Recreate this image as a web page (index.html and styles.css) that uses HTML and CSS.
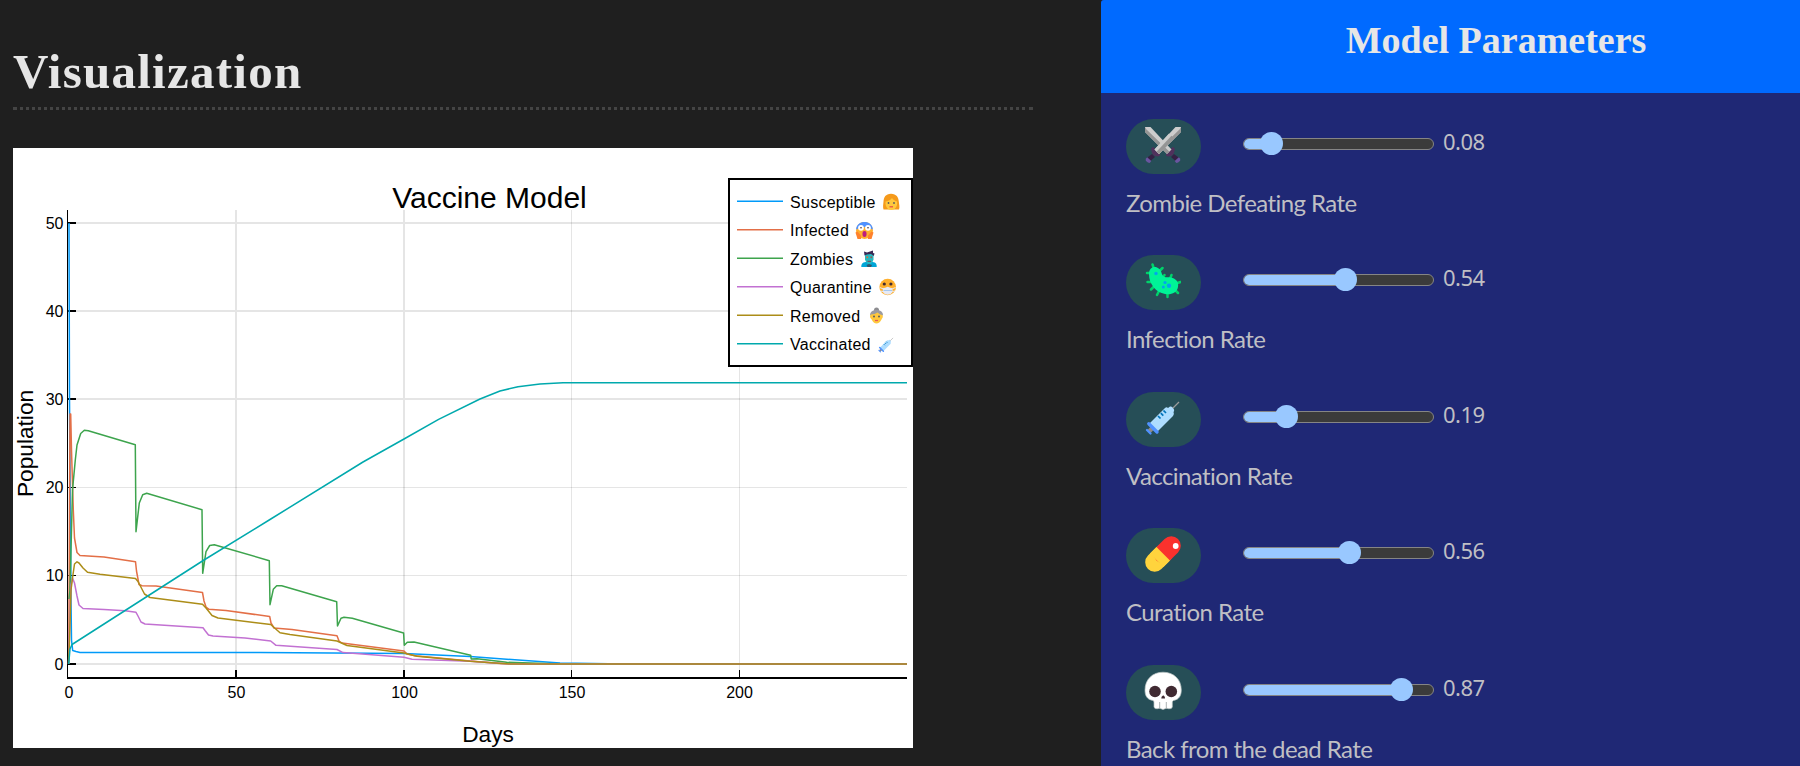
FILE: index.html
```
<!DOCTYPE html>
<html lang="en">
<head>
<meta charset="utf-8">
<title>Vaccine Model</title>
<link rel="stylesheet" href="styles.css">
</head>
<body>
<main class="notebook">
  <h1 class="section-title">Visualization</h1>
  <svg class="plot" viewBox="13 148 900 600" width="900" height="600">
    <rect x="13" y="148" width="900" height="600" fill="#fff"/>
    <g class="grid">
      <path class="thick" d="M236 210V678M404 210V678M68 223H907M68 311H907M68 399H907M68 664H907"/>
      <path d="M571.5 210V678M739.5 210V678M68 487.5H907M68 575.5H907"/>
    </g>
    <g class="axes">
      <path class="thin" d="M67.5 210V679"/>
      <path d="M67 678H907M67 223H76M67 311H76M67 399H76M67 664H76M236 670V678M404 670V678"/>
      <path class="thin" d="M67 487.5H76M67 575.5H76M571.5 670V678M739.5 670V678"/>
    </g>
    <g class="tick y">
      <text x="63.500" y="229">50</text><text x="63.500" y="317">40</text><text x="63.500" y="405">30</text>
      <text x="63.500" y="493">20</text><text x="63.500" y="581">10</text><text x="63.500" y="670">0</text>
    </g>
    <g class="tick x">
      <text x="69" y="698">0</text><text x="236.500" y="698">50</text><text x="404.500" y="698">100</text>
      <text x="572" y="698">150</text><text x="739.500" y="698">200</text>
    </g>
    <text class="plot-title" x="489.500" y="208">Vaccine Model</text>
    <text class="axis-name" x="488" y="742">Days</text>
    <text class="axis-name" transform="translate(32.500 443.500) rotate(-90)">Population</text>
    <g class="series">
      <path stroke="#009af9" d="M69 223L69.500 400L71 600L71.500 640L72.700 650.500L76 651.500L80 652.400L260 652.400L404 653.500L470 656.500L560 663L625 664H907"/>
      <path stroke="#e36f47" d="M68.800 664L69.300 560L70 414L70.700 414L71.500 450L73.300 510L74.500 538L77 552.500L80 555.500L104 557L135.500 561.700L136.500 571L139 584.500L142 585.700L156 586L202.500 592.500L204 601L206 607L209 609.300L226 610.500L269.700 616.500L271 623L274 628L292 629.500L337 635.700L339 641L342 643L404 651L407 654L415 655.800L470 661L500 663.500L540 664H907"/>
      <path stroke="#3da44d" d="M69 599L70 590L71 550L72.500 490L75.300 460L77 445L80.700 433.500L84.300 430.300L88.300 430.700L135.300 444.800L136 531.700L139.300 503L142.700 494.700L146.700 493.300L202 509.700L202.700 573.300L206 551.700L209.700 545.500L214.300 544.700L269.300 560.700L270 604.700L273.300 589.300L276.700 585.700L281.700 585.700L336.700 601.700L337.500 626L341 618.300L344 617.300L352.300 618.300L403.600 633L404.300 645.300L407.300 642.300L414 642L470.700 655.300L471.200 659L477 658.700L506.700 662.300L560 664H907"/>
      <path stroke="#c271d2" d="M68.500 664L69.500 630L71 585L72.500 578L74.500 583L77 596L79 605L83 608.500L104 609.500L125 610.800L136 612.300L138 616L141 622L145 624L203 627.700L205 630.500L208.500 635L213 636L245 638L270.700 641L276 645.300L337 649.500L343 652.600L404 657.200L412 659.300L470 661.300L510 664H907"/>
      <path stroke="#ac8d18" d="M68.500 664L69.500 640L71 590L72.500 578L74.500 564L77 561.800L79 563L83 568L87.500 572.300L100 574.300L135.500 578.500L138 581.500L144.500 594L150 597.500L202.500 604.300L206 608L212 615.500L218 618L270.700 624.500L280 632.700L290 634.500L337 641L347 645.500L404 653L417 656.300L470 661.300L510 664H907"/>
      <path stroke="#00a9ad" d="M68.700 664L70 649L72 644.500L204 560L270 519.500L363 462L404 439L438.600 419.300L480 399L500 391L518 386.700L540 384L563 382.700H907"/>
    </g>
    <g class="legend">
      <rect x="729" y="179" width="183" height="187"/>
      <g class="keys">
        <path stroke="#009af9" d="M737 201.300H783"/><path stroke="#e36f47" d="M737 229.700H783"/>
        <path stroke="#3da44d" d="M737 258.300H783"/><path stroke="#c271d2" d="M737 286.700H783"/>
        <path stroke="#ac8d18" d="M737 315.300H783"/><path stroke="#00a9ad" d="M737 343.700H783"/>
      </g>
      <text x="790" y="208">Susceptible</text><text x="790" y="236">Infected</text><text x="790" y="265">Zombies</text>
      <text x="790" y="293">Quarantine</text><text x="790" y="322">Removed</text><text x="790" y="350">Vaccinated</text>
    </g>
    <!-- woman -->
    <g transform="translate(882.500 193.500)">
      <path fill="#f59a1b" d="M8.500 .3C3 .3 1.300 4 1 8C.8 11 .2 13 1 16H16.500C17.500 13 16.500 11 16.300 8C16 4 14 .3 8.500 .3Z"/>
      <path fill="#ffc83d" d="M3 8C5 8 8 6.500 9.500 4.500C10.500 6.500 13 7.500 14.500 8C15.500 13 12 16.500 8.700 16.500C5.500 16.500 2.500 13.500 3 8Z"/>
      <circle cx="6" cy="9.500" r=".9" fill="#565a60"/><circle cx="11.500" cy="9.500" r=".9" fill="#565a60"/>
      <path d="M7 13.300H10.500" stroke="#e5454d" stroke-width="1.200"/>
    </g>
    <!-- screaming face -->
    <g transform="translate(855.500 221.500)">
      <circle cx="9" cy="9" r="8.500" fill="#ffb02e"/><path fill="#5092ff" d="M.6 8C1 3 4.500 .4 9 .4S17 3 17.400 8Q9 3 .6 8Z"/>
      <circle cx="5.500" cy="6.300" r="2.900" fill="#fff"/><circle cx="12.500" cy="6.300" r="2.900" fill="#fff"/>
      <circle cx="5.500" cy="6.300" r=".8" fill="#402a32"/><circle cx="12.500" cy="6.300" r=".8" fill="#402a32"/>
      <rect x="7" y="9.500" width="4" height="6" rx="2" fill="#bb1d80"/>
      <path fill="#ff822d" d="M0 11L2 10L5.500 14V17.500H2ZM18 11L16 10L12.500 14V17.500H16Z"/>
    </g>
    <!-- zombie -->
    <g transform="translate(861 250)">
      <path fill="#00a6d8" d="M.3 17C0 13.500 2.500 12 6 11.800H10.500C14 12 16 13.500 15.700 17Z"/>
      <path fill="#26b9c0" d="M4 3.500H12.500V9.500Q11 14 8.300 14T4 9.500Z"/>
      <path fill="#3b2a55" d="M3.500 5.500L3 1.500L6 2.500L12 .5V3L13.500 3.500L12.800 6L10 4L6 4.500Z"/>
      <circle cx="6.300" cy="7.300" r="1" fill="#d9713f"/><circle cx="10.300" cy="7.300" r="1" fill="#9b5f55"/>
      <path d="M6.500 11.300H10" stroke="#7b3a58"/><path fill="#33566c" d="M5.500 15L8 14L11 15L10 17H6.500Z"/>
    </g>
    <!-- face with medical mask -->
    <g transform="translate(879 278)">
      <circle cx="8.700" cy="9" r="8.300" fill="#ffb02e"/>
      <circle cx="5.300" cy="6" r="1.600" fill="#402a32"/><circle cx="11.900" cy="6" r="1.600" fill="#402a32"/>
      <path d="M.8 9.500L4 10.800M16.600 9.500L13.300 10.800M1.500 13L4 13.500M16 13L13.300 13.500" stroke="#e7eaf5"/>
      <path fill="#e7eaf5" d="M3.800 10.300Q6 10 8.700 8.700Q11.400 10 13.600 10.300V14Q12 16.800 8.700 16.800T3.800 14Z"/>
      <path d="M4.500 12.500H13" stroke="#a4c7ef"/>
    </g>
    <!-- older person -->
    <g transform="translate(869 307.500)">
      <circle cx="7.500" cy="2.500" r="2.500" fill="#8d8d91"/><path fill="#9b9ba1" d="M1 8C1 4 4 2.500 7.500 2.500S14 4 14 8Z"/>
      <path fill="#ffc83d" d="M2 7Q6 7 8.500 5Q11 7 13 7.500C15 9 13 11 12.500 12Q10.500 16 7.500 16T2.700 12C.5 10 .5 8 2 7Z"/>
      <circle cx="5" cy="9" r="1" fill="#555c65"/><circle cx="10" cy="9" r="1" fill="#555c65"/>
      <path d="M6 13H9" stroke="#e55858" stroke-width="1.200"/>
    </g>
    <svg x="878" y="337" width="16" height="16" viewBox="0 0 36 36"><use href="#syringe"/></svg>
  </svg>
</main>

<aside class="panel">
  <header class="panel-head"><h2>Model Parameters</h2></header>
  <div class="params">
    <section class="param">
      <div class="control">
        <span class="badge"><svg viewBox="0 0 36 36" width="36" height="36">
          <g id="blade">
            <path fill="#50315c" d="M8.500 20Q5.800 20.500 6.300 23Q7 29 12.500 29.500Q15.500 29.300 15 27Z"/>
            <path fill="#352044" d="M7 27L10 30L5 34.500L1.700 31Z"/>
            <path fill="#6a55a0" d="M2.200 30.300L6.300 34L4.700 36Q3 36 .8 33.700Q0 31.500 2.200 30.300Z"/>
            <path fill="#cdcdcd" d="M30.500 0H36V5L14 27L9.500 22.500Z"/>
            <path fill="#959595" d="M36 5L14 27L11.500 24.700L34.500 2.500L36 0Z"/>
          </g>
          <use href="#blade" transform="matrix(-1 0 0 1 36 0)"/>
          <path fill="#cdcdcd" d="M24 6.500L28.500 11L14 27L9.500 22.500Z"/><path fill="#959595" d="M26.500 8.800L29.500 11.500L14 27L11.500 24.700Z"/>
        </svg></span>
        <div class="slider"><span class="fill" style="width:27.5px"></span></div>
        <output>0.08</output>
      </div>
      <p>Zombie Defeating Rate</p>
    </section>
    <section class="param">
      <div class="control">
        <span class="badge"><svg viewBox="0 0 36 36" width="36" height="36">
          <path d="M7.500 1.500L9 6M17.500 5L14.500 8M2 10H6M2.500 19H7M19.500 12L17.500 15M26.500 12L25 16M35.500 19L31 20.500M6 26.500L9 23.500M12 32L14 28M22.500 34V29M33 30L30 27" stroke="#00d26a" stroke-width="2.500" stroke-linecap="round" fill="none"/>
          <path fill="#00f397" d="M4 11C4 5.500 8 3 12 4.500C16 6 16 9 17.500 12C19 15 22 14 26 14.500C31 15.500 34 19 33 24C32 30 26 32 20 31C11 29.500 4 21 4 11Z"/>
          <g fill="#00a6ed"><circle cx="11" cy="10.500" r="1.700"/><circle cx="20" cy="19.500" r="1.600"/><circle cx="24" cy="22.700" r="2.200"/><circle cx="18.300" cy="24" r="1.500"/></g>
        </svg></span>
        <div class="slider"><span class="fill" style="width:101.5px"></span></div>
        <output>0.54</output>
      </div>
      <p>Infection Rate</p>
    </section>
    <section class="param">
      <div class="control">
        <span class="badge"><svg viewBox="0 0 36 36" width="36" height="36">
          <g id="syringe">
            <path d="M27 9L34 2" stroke="#9b9b9b" stroke-width="1.200"/>
            <path d="M4 31.500L8 27.500" stroke="#8c8c8c" stroke-width="4.500"/>
            <path d="M2 30L5.500 33.500" stroke="#5092ff" stroke-width="2.300" stroke-linecap="round"/>
            <path fill="#aeddff" d="M3.500 24.500L20 8Q21.500 6.500 23 8L25 6.500Q26.500 6 27.500 7.500L29 9.500Q29.500 11 28.500 12Q29.500 14 28 16L12 32Z"/>
            <path d="M13 16L15.500 18.500M15.800 13.200L18.300 15.700M18.500 10.500L21 13" stroke="#0074ba" stroke-width="1.700"/>
            <path d="M3.800 23.800L12 32" stroke="#5092ff" stroke-width="3.400" stroke-linecap="round"/>
          </g>
        </svg></span>
        <div class="slider"><span class="fill" style="width:42.5px"></span></div>
        <output>0.19</output>
      </div>
      <p>Vaccination Rate</p>
    </section>
    <section class="param">
      <div class="control">
        <span class="badge"><svg viewBox="0 0 36 36" width="36" height="36">
          <path d="M9.700 26.300L18 18" stroke="#ffd43d" stroke-width="19" stroke-linecap="round"/>
          <path d="M18.200 17.800L26.300 9.700" stroke="#fa312d" stroke-width="19" stroke-linecap="round"/>
          <path d="M11.700 24.300L18.200 17.800" stroke="#ffd43d" stroke-width="19"/>
          <circle cx="30.700" cy="10" r="2.900" fill="#fff"/>
        </svg></span>
        <div class="slider"><span class="fill" style="width:105.5px"></span></div>
        <output>0.56</output>
      </div>
      <p>Curation Rate</p>
    </section>
    <section class="param">
      <div class="control">
        <span class="badge"><svg viewBox="0 0 36 36" width="36" height="36" overflow="visible">
          <path fill="#fff" stroke="#b8c1c1" stroke-width=".7" d="M18-.8C7.500-.8 0 6.500 0 17C0 22 1.500 26.500 8 27.500C9 28 9 29 9 31V34Q9.500 36.300 12.500 35.700L14.500 35.200L18 36.500L21.500 35.200L23.500 35.700Q27 36.300 27.300 34V31C27.300 29 27.300 28 28.500 27.500C34.500 26.500 36.300 22 36.300 17C36.300 6.500 29-.8 18-.8Z"/>
          <path d="M14.700 29V36M21.300 29V36" stroke="#a3a9aa" stroke-width=".9"/>
          <circle cx="10" cy="18.500" r="5.800" fill="#402a32"/><circle cx="26.300" cy="18.500" r="5.800" fill="#402a32"/>
          <path fill="#402a32" d="M18.200 22.300Q20.400 23.500 20 25.600H16.300Q16 23.500 18.200 22.300Z"/>
        </svg></span>
        <div class="slider"><span class="fill" style="width:157.5px"></span></div>
        <output>0.87</output>
      </div>
      <p>Back from the dead Rate</p>
    </section>
  </div>
</aside>
</body>
</html>
```
FILE: styles.css
```
* { box-sizing: border-box; }
body {
  margin: 0;
  height: 766px;
  overflow: hidden;
  display: flex;
  background: #1f1f1f;
  font-family: Lato, sans-serif;
}
.notebook { width: 1101px; padding: 44px 68px 0 13px; }
.section-title {
  margin: 0 0 38px;
  height: 66px;
  border-bottom: 3px dotted #444;
  font: bold 49px/56px "Liberation Serif", serif;
  letter-spacing: 1.25px;
  color: #e6e6e6;
}
.plot { display: block; font-family: "Liberation Sans", Arial, sans-serif; }
.plot text { fill: #000; }
.grid path { stroke: #000; stroke-opacity: .1; stroke-width: 1; fill: none; }
.grid .thick { stroke-width: 2; }
.axes path { stroke: #000; stroke-width: 2; fill: none; }
.axes .thin { stroke-width: 1; }
.tick { font-size: 16px; }
.tick.y { text-anchor: end; }
.tick.x, .plot-title, .axis-name { text-anchor: middle; }
.plot-title { font-size: 30px; }
.axis-name { font-size: 22.7px; }
.series path { fill: none; stroke-width: 1.5; stroke-linejoin: round; }
.legend rect { fill: #fff; stroke: #000; stroke-width: 2; }
.legend text { font-size: 16px; letter-spacing: .28px; }
.keys path { stroke-width: 1.5; }

.panel { width: 699px; background: #1f2875; border-radius: 3px 0 0; overflow: hidden; }
.panel-head { height: 93px; padding-left: 91px; background: #006aff; text-align: center; }
.panel-head h2 {
  margin: 0;
  font: bold 38px/80px "Liberation Serif", serif;
  color: #e6e6e6;
}
.params { padding: 26px 25px 0; }
.param { height: 136.400px; color: #bfbfc4; font-size: 24px; }
.control { display: flex; height: 55px; }
.badge {
  width: 75px;
  height: 55px;
  border-radius: 28px;
  background: #264e57;
  display: flex;
  justify-content: center;
  padding-top: 8px;
}
.badge svg { margin-right: 1px; }
.slider {
  width: 191px;
  height: 12px;
  margin: 19px 9px 0 42px;
  border: 1px solid #858585;
  border-radius: 6px;
  background: #3b3b3b;
}
.fill {
  display: block;
  position: relative;
  height: 10px;
  border-radius: 5px 0 0 5px;
  background: #99c8ff;
}
.fill::after {
  content: "";
  position: absolute;
  right: -11px;
  top: -7px;
  width: 23px;
  height: 23px;
  border-radius: 50%;
  background: #99c8ff;
}
.control output { font: 22px/45px "Noto Sans", sans-serif; letter-spacing: -.5px; }
.param p { margin: 14px 0 0; line-height: 29px; letter-spacing: -.57px; }
```
